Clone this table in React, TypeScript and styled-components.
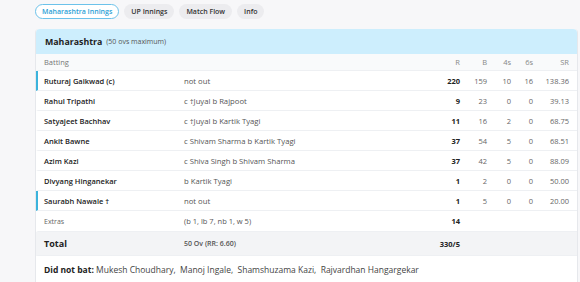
import React from "react";
import styled, { createGlobalStyle } from "styled-components";

const Global = createGlobalStyle`
  html, body { margin: 0; padding: 0; background: #f7f7f9; }
  body { font-family: "Open Sans", "Noto Sans", sans-serif; color: #222; }
  * { box-sizing: border-box; }
`;

const Page = styled.div`
  width: 580px;
  height: 282px;
  overflow: hidden;
  padding: 4px 2px 0 35px;
  display: flex;
  flex-direction: column;
  gap: 10px;
`;

const Tabs = styled.div`
  display: flex;
  gap: 5px;
  align-items: center;
`;

const Tab = styled.div<{ $active?: boolean }>`
  height: 15px;
  padding: 0 6px;
  border-radius: 8px;
  display: flex;
  align-items: center;
  font-size: 7px;
  font-weight: 600;
  color: ${(p) => (p.$active ? "#2d9fd6" : "#333")};
  background: ${(p) => (p.$active ? "#fff" : "#ececef")};
  border: 1px solid ${(p) => (p.$active ? "#6cc2ea" : "transparent")};
`;

const Card = styled.div`
  background: #fff;
  border: 1px solid #e6e8ec;
  border-top: none;
  border-radius: 4px 4px 0 0;
  display: flex;
  flex-direction: column;
`;

const Header = styled.div`
  height: 25px;
  background: #cdeefd;
  border-radius: 4px 4px 0 0;
  padding-left: 9px;
  display: flex;
  align-items: center;
  gap: 4px;
`;

const Team = styled.span`
  font-size: 8.8px;
  font-weight: 700;
  color: #222;
`;

const Sub = styled.span`
  font-size: 7px;
  color: #555;
`;

const cols = "140px 1fr 40px 27px 24px 22px 36px";

const Row = styled.div<{ $h?: number; $bg?: string; $notout?: boolean }>`
  display: grid;
  grid-template-columns: ${cols};
  align-items: center;
  height: ${(p) => p.$h ?? 20}px;
  padding: 0 8px 0 6px;
  background: ${(p) => p.$bg ?? "#fff"};
  border-bottom: 1px solid #eef0f3;
  border-left: 2px solid ${(p) => (p.$notout ? "#3bb3dc" : "transparent")};
  font-size: 7.5px;
`;

const Name = styled.span<{ $weight?: number; $size?: number; $color?: string }>`
  font-weight: ${(p) => p.$weight ?? 600};
  font-size: ${(p) => p.$size ?? 7.5}px;
  color: ${(p) => p.$color ?? "#222"};
  white-space: nowrap;
`;

const Dis = styled.span<{ $bold?: boolean; $size?: number }>`
  color: #555;
  font-weight: ${(p) => (p.$bold ? 600 : 400)};
  white-space: nowrap;
  font-size: ${(p) => p.$size ?? 7.7}px;
`;

const Num = styled.span<{ $strong?: boolean; $muted?: boolean }>`
  text-align: right;
  white-space: nowrap;
  font-weight: ${(p) => (p.$strong ? 700 : 400)};
  color: ${(p) => (p.$strong ? "#222" : p.$muted ? "#888" : "#666")};
`;

const DidNotBat = styled.div`
  height: 26px;
  display: flex;
  align-items: center;
  padding-left: 8px;
  font-size: 8.5px;
  color: #444;
  background: #fff;
  white-space: nowrap;
  b { color: #222; font-weight: 700; }
`;

type Bat = {
  name: string;
  dis: string;
  r: number;
  b: number;
  f: number;
  s: number;
  sr: string;
  notout?: boolean;
};

const batters: Bat[] = [
  { name: "Ruturaj Gaikwad (c)", dis: "not out", r: 220, b: 159, f: 10, s: 16, sr: "138.36", notout: true },
  { name: "Rahul Tripathi", dis: "c \u2020Juyal b Rajpoot", r: 9, b: 23, f: 0, s: 0, sr: "39.13" },
  { name: "Satyajeet Bachhav", dis: "c \u2020Juyal b Kartik Tyagi", r: 11, b: 16, f: 2, s: 0, sr: "68.75" },
  { name: "Ankit Bawne", dis: "c Shivam Sharma b Kartik Tyagi", r: 37, b: 54, f: 5, s: 0, sr: "68.51" },
  { name: "Azim Kazi", dis: "c Shiva Singh b Shivam Sharma", r: 37, b: 42, f: 5, s: 0, sr: "88.09" },
  { name: "Divyang Hinganekar", dis: "b Kartik Tyagi", r: 1, b: 2, f: 0, s: 0, sr: "50.00" },
  { name: "Saurabh Nawale \u2020", dis: "not out", r: 1, b: 5, f: 0, s: 0, sr: "20.00", notout: true },
];

export default function App() {
  return (
    <>
      <Global />
      <Page>
        <Tabs>
          <Tab $active>Maharashtra Innings</Tab>
          <Tab>UP Innings</Tab>
          <Tab>Match Flow</Tab>
          <Tab>Info</Tab>
        </Tabs>
        <Card>
          <Header>
            <Team>Maharashtra</Team>
            <Sub>(50 ovs maximum)</Sub>
          </Header>
          <Row $h={17} $bg="#f9fafb">
            <Name $weight={400} $color="#777">Batting</Name>
            <span />
            <Num $muted>R</Num>
            <Num $muted>B</Num>
            <Num $muted>4s</Num>
            <Num $muted>6s</Num>
            <Num $muted>SR</Num>
          </Row>
          {batters.map((b) => (
            <Row key={b.name} $notout={b.notout}>
              <Name>{b.name}</Name>
              <Dis>{b.dis}</Dis>
              <Num $strong>{b.r}</Num>
              <Num>{b.b}</Num>
              <Num>{b.f}</Num>
              <Num>{b.s}</Num>
              <Num>{b.sr}</Num>
            </Row>
          ))}
          <Row $h={21}>
            <Name $weight={400} $color="#666" $size={7}>Extras</Name>
            <Dis $size={7.5}>(b 1, lb 7, nb 1, w 5)</Dis>
            <Num $strong>14</Num>
          </Row>
          <Row $h={24} $bg="#f3f4f6">
            <Name $weight={700} $size={9}>Total</Name>
            <Dis $bold $size={7}>50 Ov (RR: 6.60)</Dis>
            <Num $strong>330/5</Num>
          </Row>
          <DidNotBat>
            <b>Did not bat:</b>&nbsp;Mukesh Choudhary,&nbsp; Manoj Ingale,&nbsp; Shamshuzama Kazi,&nbsp; Rajvardhan Hangargekar
          </DidNotBat>
        </Card>
      </Page>
    </>
  );
}
